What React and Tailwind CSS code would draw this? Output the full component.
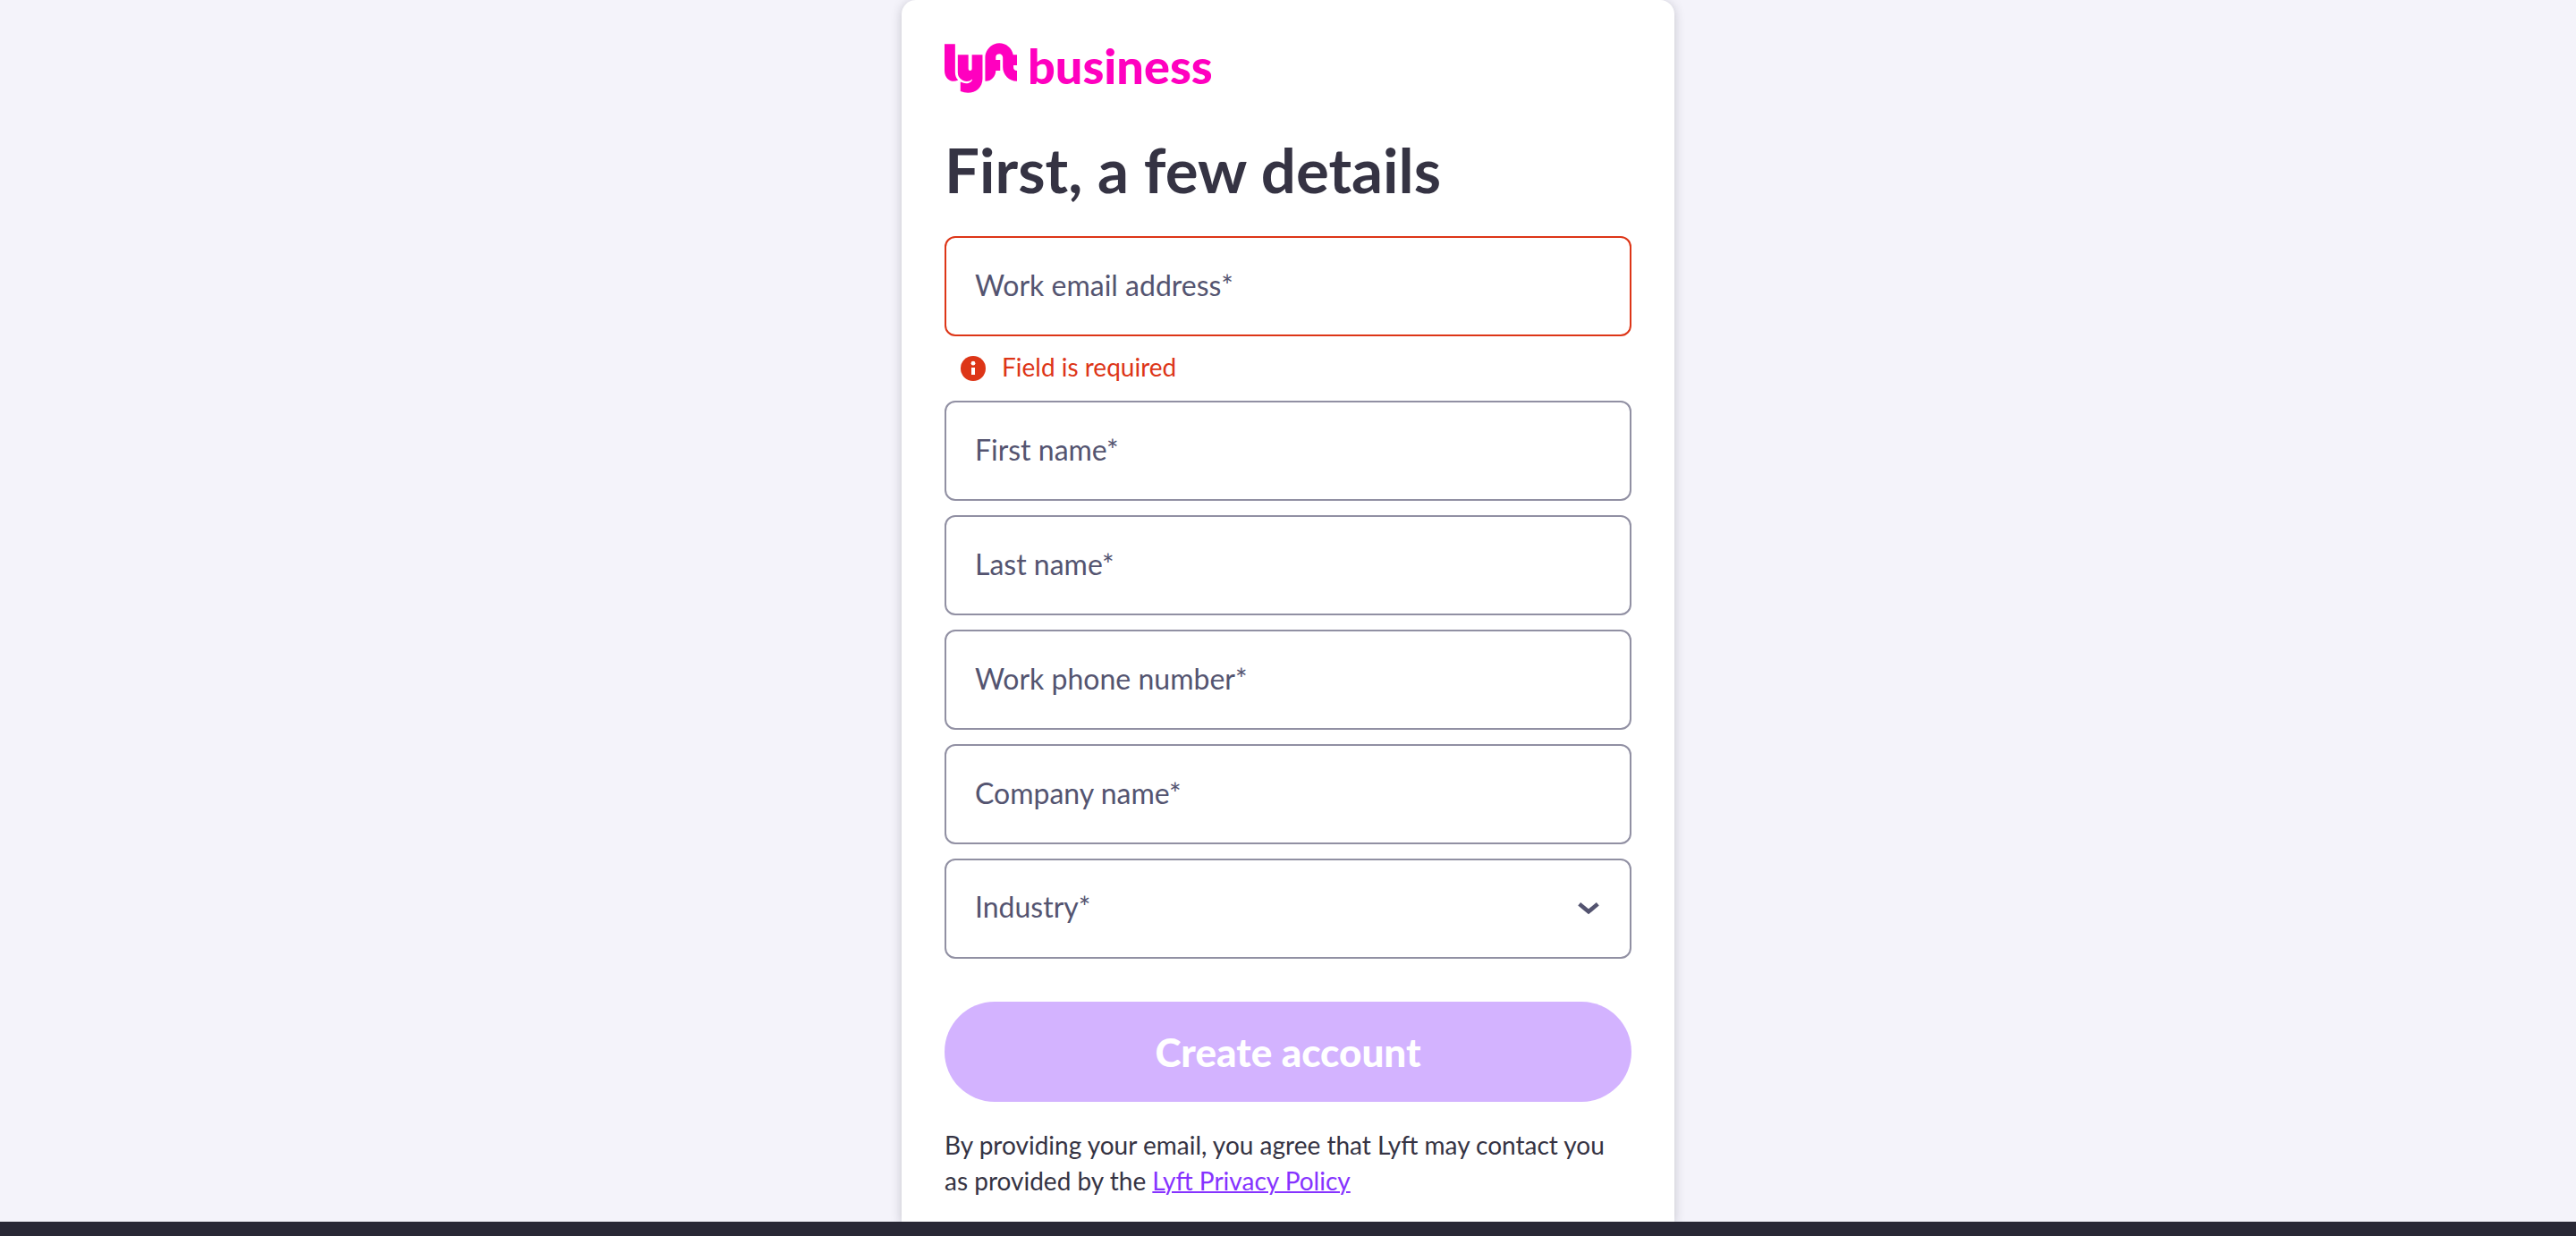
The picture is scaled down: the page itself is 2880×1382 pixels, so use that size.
import { SiLyft } from "react-icons/si";

const fieldClass =
  "block h-28 w-full rounded-xl border-2 bg-white px-8 pb-1 text-[32px] leading-12 text-[#545470] outline-none placeholder:text-[#545470] placeholder:opacity-100";

function Field({ id, label, type = "text", error }) {
  return (
    <div>
      <label htmlFor={id} className="sr-only">
        {label}
      </label>
      <input
        id={id}
        type={type}
        placeholder={`${label}*`}
        aria-invalid={error ? true : undefined}
        aria-describedby={error ? `${id}-error` : undefined}
        className={`${fieldClass} ${error ? "border-[#dd3517]" : "border-[#9190a3]"}`}
      />
      {error && (
        <p
          id={`${id}-error`}
          className="flex h-14 items-center gap-[18px] pt-4 pl-[18px] text-[28px] leading-9 text-[#dd3517]"
        >
          <svg viewBox="0 0 28 28" className="size-7" aria-hidden="true">
            <circle cx="14" cy="14" r="14" fill="#dd3517" />
            <circle cx="14" cy="8.2" r="2.4" fill="#fff" />
            <rect x="12" y="13" width="4" height="8" fill="#fff" />
          </svg>
          <span className="pb-1">{error}</span>
        </p>
      )}
    </div>
  );
}

export default function App() {
  return (
    <div className="flex min-h-screen flex-col bg-[#f4f3fa] font-[Lato,sans-serif] text-[#353343]">
      <main className="mx-auto flex w-full max-w-[864px] flex-1 flex-col rounded-t-2xl bg-white px-12 pt-12 pb-6 shadow-[0_2px_12px_rgba(53,51,67,0.25)]">
        <div className="flex h-14 items-center gap-3 text-[#ff00bf]">
          <SiLyft
            className="h-14 w-[81px]"
            preserveAspectRatio="xMidYMid slice"
            aria-label="Lyft"
          />
          <span className="pb-1 text-[54px] leading-none font-black">business</span>
        </div>

        <h1 className="mt-11 text-[69px] leading-[84px] font-bold">First, a few details</h1>

        <form className="mt-8" onSubmit={(e) => e.preventDefault()}>
          <div className="flex flex-col gap-4">
            <Field id="email" label="Work email address" type="email" error="Field is required" />
            <Field id="first-name" label="First name" />
            <Field id="last-name" label="Last name" />
            <Field id="phone" label="Work phone number" type="tel" />
            <Field id="company" label="Company name" />
            <div className="relative">
              <label htmlFor="industry" className="sr-only">
                Industry
              </label>
              <select
                id="industry"
                defaultValue=""
                className={`${fieldClass} appearance-none border-[#9190a3]`}
              >
                <option value="">Industry*</option>
              </select>
              <svg
                viewBox="0 0 24 14"
                className="pointer-events-none absolute inset-y-0 right-9 my-auto h-3.5 w-6"
                aria-hidden="true"
              >
                <path d="M1.7 1.8 12 10.3 22.3 1.8" fill="none" stroke="#545470" strokeWidth="4.6" />
              </svg>
            </div>
          </div>
          <button
            type="submit"
            className="mt-12 h-28 w-full rounded-full bg-[#d3b3ff] text-[44px] font-black text-white"
          >
            Create account
          </button>
        </form>

        <p className="mt-7 text-[28px] leading-10">
          By providing your email, you agree that Lyft may contact you as provided by the{" "}
          <a href="#privacy" className="text-[#8633ff] underline decoration-2">
            Lyft Privacy Policy
          </a>
        </p>
      </main>
      <footer className="relative h-4 bg-[#292835]" />
    </div>
  );
}
